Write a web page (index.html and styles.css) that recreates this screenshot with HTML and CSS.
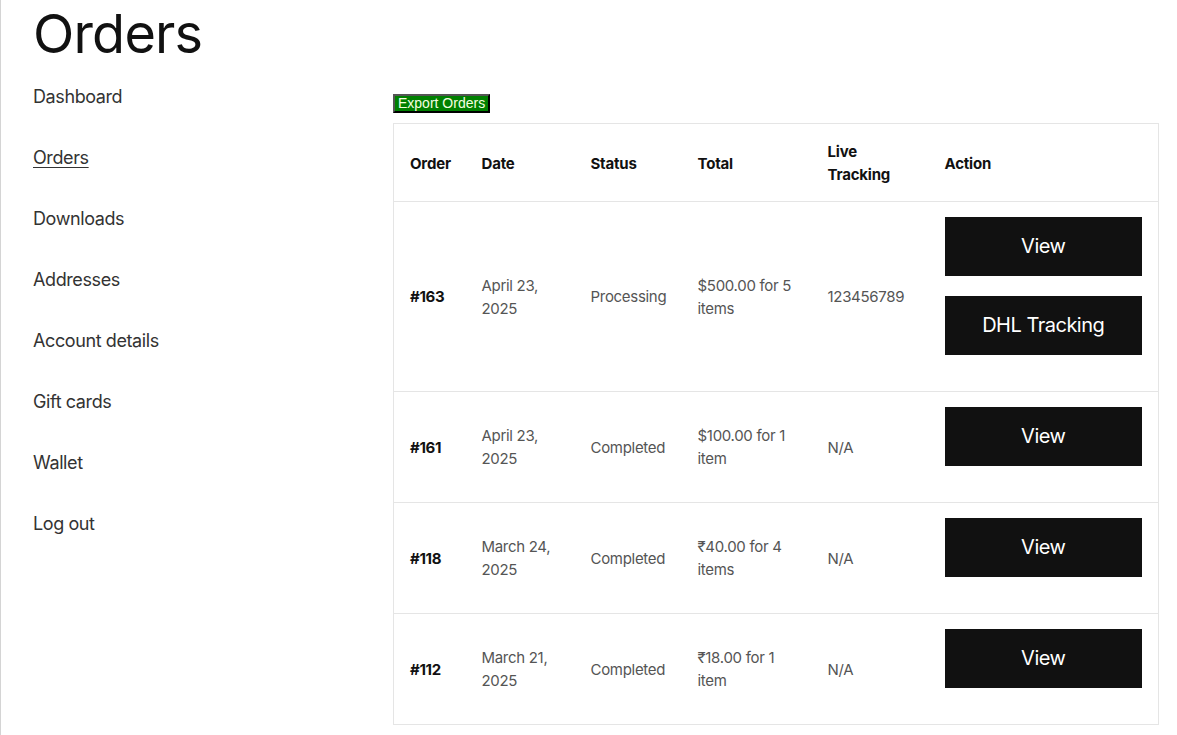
FILE: index.html
```
<!DOCTYPE html>
<html lang="en">

<head>
  <meta charset="UTF-8" />
  <meta name="viewport" content="width=device-width, initial-scale=1.0" />
  <title>Orders</title>
  <link rel="stylesheet" href="styles.css">
</head>

<body>
  <div class="page">
    <h1 class="page-title">Orders</h1>

    <div class="account">
      <nav class="account-nav">
        <a href="#">Dashboard</a>
        <a href="#" class="active">Orders</a>
        <a href="#">Downloads</a>
        <a href="#">Addresses</a>
        <a href="#">Account details</a>
        <a href="#">Gift cards</a>
        <a href="#">Wallet</a>
        <a href="#">Log out</a>
      </nav>

      <div class="account-content">
        <button class="export-btn">Export Orders</button>

        <table class="orders-table">
          <colgroup>
            <col style="width: 72px">
            <col style="width: 109px">
            <col style="width: 107px">
            <col style="width: 130px">
            <col style="width: 117px">
            <col style="width: 230px">
          </colgroup>
          <thead>
            <tr>
              <th>Order</th>
              <th>Date</th>
              <th>Status</th>
              <th>Total</th>
              <th>Live Tracking</th>
              <th>Action</th>
            </tr>
          </thead>
          <tbody>
            <tr>
              <td class="order-no">#163</td>
              <td>April 23, 2025</td>
              <td>Processing</td>
              <td>$500.00 for 5 items</td>
              <td>123456789</td>
              <td>
                <a href="#" class="btn">View</a>
                <a href="#" class="btn">DHL Tracking</a>
              </td>
            </tr>
            <tr>
              <td class="order-no">#161</td>
              <td>April 23, 2025</td>
              <td>Completed</td>
              <td>$100.00 for 1 item</td>
              <td>N/A</td>
              <td><a href="#" class="btn">View</a></td>
            </tr>
            <tr>
              <td class="order-no">#118</td>
              <td>March 24, 2025</td>
              <td>Completed</td>
              <td>&#8377;40.00 for 4 items</td>
              <td>N/A</td>
              <td><a href="#" class="btn">View</a></td>
            </tr>
            <tr>
              <td class="order-no">#112</td>
              <td>March 21, 2025</td>
              <td>Completed</td>
              <td>&#8377;18.00 for 1 item</td>
              <td>N/A</td>
              <td><a href="#" class="btn">View</a></td>
            </tr>
          </tbody>
        </table>
      </div>
    </div>
  </div>
</body>

</html>
```

FILE: styles.css
```
html,
body {
  height: 100%;
}

body {
  margin: 0;
  border-left: 1px solid #d4d4d4;
  font-family: Inter, "Noto Sans", sans-serif;
  color: #222;
  background: white;
}

.page {
  padding: 0 32px;
}

.page-title {
  margin: 0;
  padding-top: 2px;
  font-size: 54px;
  font-weight: 400;
  line-height: 64px;
  letter-spacing: -0.8px;
  color: #111;
}

.account {
  display: flex;
  align-items: flex-start;
}

.account-nav {
  width: 360px;
  flex-shrink: 0;
  display: flex;
  flex-direction: column;
  gap: 37px;
  padding-top: 19px;
}

.account-nav a {
  font-size: 18px;
  line-height: 24px;
  color: #333;
  text-decoration: none;
  letter-spacing: -0.4px;
  width: fit-content;
}

.account-nav a.active {
  text-decoration: underline;
  text-underline-offset: 3px;
}

.account-content {
  padding-top: 28px;
}

.export-btn {
  display: block;
  margin: 0 0 10px;
  padding: 0 3px;
  height: 19px;
  background: green;
  color: #f4ffe0;
  border: 2px outset #555;
  font-family: "Liberation Sans", Arial, sans-serif;
  font-size: 14px;
  line-height: 15px;
}

.orders-table {
  width: 765px;
  table-layout: fixed;
  border-collapse: collapse;
  border: 1px solid #e5e5e5;
  font-size: 15px;
  line-height: 23px;
}

.orders-table th,
.orders-table td {
  padding: 16px;
  text-align: left;
  vertical-align: middle;
  border-top: 1px solid #e5e5e5;
}

.orders-table th {
  padding-bottom: 15px;
  font-weight: 700;
  color: #111;
  letter-spacing: -0.2px;
}

.orders-table td {
  color: #555;
  letter-spacing: -0.3px;
}

.orders-table td:last-child {
  padding-top: 15px;
  padding-bottom: 16px;
}

.orders-table td.order-no {
  font-weight: 700;
  color: #111;
}

.btn {
  display: flex;
  align-items: center;
  justify-content: center;
  height: 59px;
  margin-bottom: 20px;
  background: #111;
  color: white;
  font-size: 20px;
  text-decoration: none;
  letter-spacing: -0.5px;
}
```
